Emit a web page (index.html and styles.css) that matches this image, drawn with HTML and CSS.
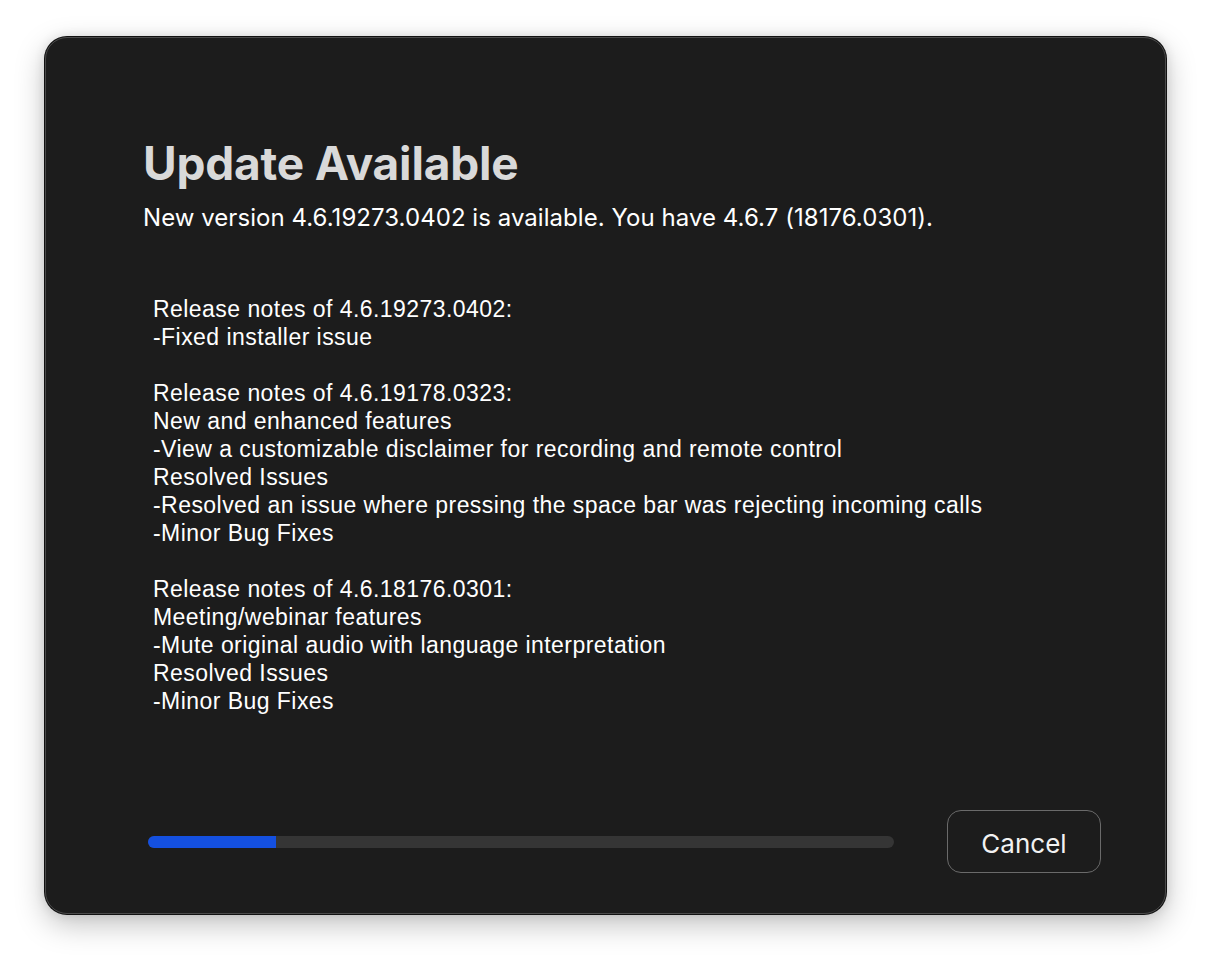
FILE: index.html
```html
<!DOCTYPE html>
<html>
<head>
<meta charset="utf-8">
<link rel="stylesheet" href="styles.css">
</head>
<body>
<div class="window">
  <div class="content">
    <h1 class="title">Update Available</h1>
    <p class="subtitle">New version 4.6.19273.0402 is available. You have 4.6.7 (18176.0301).</p>
    <div class="notes">
      <div>Release notes of 4.6.19273.0402:</div>
      <div>-Fixed installer issue</div>
      <div class="blank"></div>
      <div>Release notes of 4.6.19178.0323:</div>
      <div>New and enhanced features</div>
      <div>-View a customizable disclaimer for recording and remote control</div>
      <div>Resolved Issues</div>
      <div>-Resolved an issue where pressing the space bar was rejecting incoming calls</div>
      <div>-Minor Bug Fixes</div>
      <div class="blank"></div>
      <div>Release notes of 4.6.18176.0301:</div>
      <div>Meeting/webinar features</div>
      <div>-Mute original audio with language interpretation</div>
      <div>Resolved Issues</div>
      <div>-Minor Bug Fixes</div>
    </div>
  </div>
  <div class="footer">
    <div class="track"><div class="fill" style="width:128px"></div></div>
    <button class="cancel">Cancel</button>
  </div>
</div>
</body>
</html>
```
FILE: styles.css
```css
html, body {
  margin: 0;
  padding: 0;
  background: #ffffff;
}
body {
  width: 1212px;
  height: 968px;
  padding: 37px 0 0 45px;
  box-sizing: border-box;
}
.window {
  width: 1121px;
  height: 877px;
  box-sizing: border-box;
  background: #1c1c1c;
  border: 1px solid #4a4a4a;
  border-radius: 22px;
  box-shadow: 0 0 0 1px #111, 0 10px 30px rgba(0,0,0,0.25), 0 0 12px rgba(0,0,0,0.12);
  display: flex;
  flex-direction: column;
  justify-content: space-between;
}
.content {
  padding: 98px 0 0 97px;
}
.title {
  margin: 0;
  font-family: Inter, "Noto Sans", sans-serif;
  font-weight: 700;
  font-size: 46px;
  line-height: 54px;
  color: #d9d9d9;
  letter-spacing: -0.2px;
}
.subtitle {
  margin: 13px 0 0 0;
  font-family: Inter, "Noto Sans", sans-serif;
  font-size: 24px;
  letter-spacing: 0.05px;
  line-height: 30px;
  color: #ffffff;
}
.notes {
  margin: 62px 0 0 10px;
  font-family: "Liberation Sans", Arial, sans-serif;
  font-size: 23px;
  letter-spacing: 0.45px;
  line-height: 28px;
  color: #ffffff;
}
.blank {
  height: 28px;
}
.footer {
  display: flex;
  align-items: center;
  padding: 0 64px 40px 102px;
}
.track {
  width: 746px;
  height: 12px;
  border-radius: 6px;
  background: #353535;
  overflow: hidden;
}
.fill {
  height: 100%;
  background: #1450e0;
}
.cancel {
  margin-left: auto;
  width: 154px;
  height: 63px;
  box-sizing: border-box;
  background: transparent;
  border: 1.5px solid #6a6a6a;
  border-radius: 14px;
  color: #f2f2f2;
  font-family: Inter, "Noto Sans", sans-serif;
  font-size: 26px;
  padding: 4px 0 0 0;
}
```
